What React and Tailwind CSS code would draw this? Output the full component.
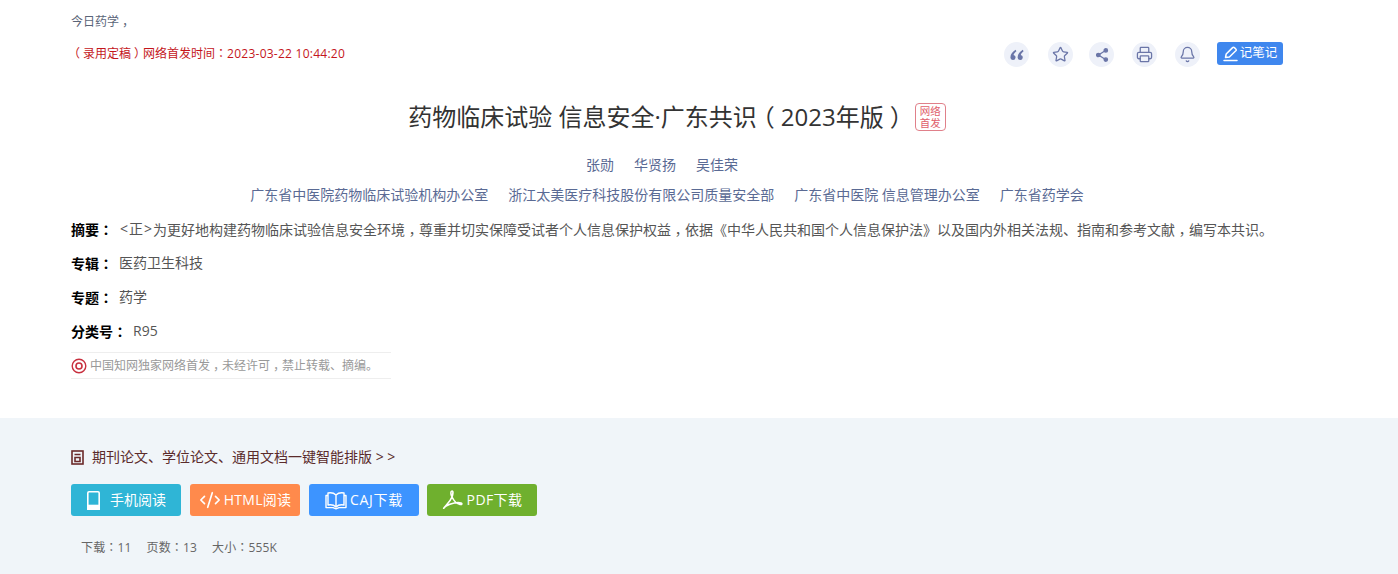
import React from 'react';
import { Star, Printer, Bell, CodeXml } from 'lucide-react';

const font = 'font-["Open_Sans","Noto_Sans_CJK_SC",sans-serif]';

// the reference centres its full-width punctuation, the SC font does not
const Zh = ({ children }) => children.split(/([：，（）])/).map((part, i) => {
    if (part === '：') return <span key={i} className='font-["Noto_Sans_CJK_TC",sans-serif]'>：</span>;
    if (part === '，') return <span key={i} className='inline-block translate-y-[0.3em] font-["Noto_Sans_CJK_TC",sans-serif]'>，</span>;
    if (part === '（' || part === '）') return <span key={i} className="inline-block px-[0.25em] [font-feature-settings:'halt']">{part}</span>;
    return part;
});

const QuoteIcon = () => (
    <svg viewBox="0 0 16 16" className="w-4 h-4" fill="#6b76a8">
        <path d="M6.600 2.800 C3.800 4.400 1.400 7 1.400 10.400 a2.600 2.600 0 1 0 3.200-2.500 C4.800 6.800 5.800 5.400 7.400 4.200 Z" />
        <path d="M13.800 2.800 C11 4.400 8.600 7 8.600 10.400 a2.600 2.600 0 1 0 3.200-2.500 C12 6.800 13 5.400 14.600 4.200 Z" />
    </svg>
);

const NoteIcon = () => (
    <svg viewBox="0 0 15 16" className="w-[15px] h-4" fill="none" stroke="currentColor" strokeWidth="1.500" strokeLinecap="round" strokeLinejoin="round">
        <path d="M2.500 11.500 L3.200 8 L9.600 1.600 a1.300 1.300 0 0 1 1.800 0 l1.400 1.400 a1.300 1.300 0 0 1 0 1.800 L6.400 11 Z" />
        <path d="M1 14.600 H14" />
    </svg>
);

const TabletIcon = () => (
    <svg viewBox="0 0 15 19" className="w-[15px] h-[19px] mr-[9px]" fill="none" stroke="currentColor" strokeWidth="1.600">
        <rect x="1.800" y="0.800" width="11.400" height="17.400" rx="1.200" />
        <rect x="1.800" y="14.500" width="11.400" height="3.700" fill="currentColor" />
    </svg>
);

const BookIcon = () => (
    <svg viewBox="0 0 22 19" className="w-[22px] h-[19px] mr-[3px]" fill="none" stroke="currentColor" strokeWidth="1.400" strokeLinejoin="round">
        <path d="M11 4 C9 2 6 1.400 3 2 V14 C6 13.400 9 14 11 16 C13 14 16 13.400 19 14 V2 C16 1.400 13 2 11 4 V16" />
        <path d="M3 4.500 H1 V16.600 H8 L11 17.800 L14 16.600 H21 V4.500 H19" />
    </svg>
);

const AcrobatIcon = () => (
    <svg viewBox="0 0 21 20" className="w-[21px] h-5 mr-1" fill="none" stroke="currentColor" strokeWidth="1.600" strokeLinecap="round" strokeLinejoin="round">
        <path d="M2 18 C4 15 8 12 10 7 C11 4 11.500 1 10 1 C8.500 1 8.500 4 10 7 C12 11 15 14 18 14.500 C20 14.800 20.500 13.500 19 13 C16 12 9 13 4 16 C2.500 17 1 19 2 18 Z" />
    </svg>
);

const DocIcon = () => (
    <svg viewBox="0 0 13 15" className="w-[13px] h-[15px] shrink-0" fill="none" stroke="#6b2a2a" strokeWidth="1.600">
        <rect x="1" y="1" width="11" height="13" />
        <path d="M3.500 4.500h6M4 7.500h5v4H4z" />
    </svg>
);

const TargetIcon = () => (
    <svg viewBox="0 0 16 16" className="w-4 h-4 shrink-0" fill="none" stroke="#c8303f">
        <circle cx="8" cy="8" r="6.800" strokeWidth="1.400" />
        <circle cx="8" cy="8" r="3" strokeWidth="1.600" />
    </svg>
);

const ShareIcon = () => (
    <svg viewBox="0 0 16 16" className="w-4 h-4" fill="currentColor" stroke="currentColor" strokeWidth="1.300">
        <path d="M11.500 3.500 L4.500 8 L11.500 12.500" fill="none" />
        <circle cx="11.800" cy="3.400" r="1.700" />
        <circle cx="4.300" cy="8" r="1.700" />
        <circle cx="11.800" cy="12.600" r="1.700" />
    </svg>
);

const tools = [
    { id: 'quote', icon: <QuoteIcon />, ml: '' },
    { id: 'star', icon: <Star className="w-[17px] h-[17px]" strokeWidth={1.800} />, ml: 'ml-[19px]' },
    { id: 'share', icon: <ShareIcon />, ml: 'ml-[16px]' },
    { id: 'print', icon: <Printer className="w-[17px] h-[17px]" strokeWidth={1.800} />, ml: 'ml-[18px]' },
    { id: 'bell', icon: <Bell className="w-[17px] h-[17px]" strokeWidth={1.800} />, ml: 'ml-[18px]' },
];

const orgs = ['广东省中医院药物临床试验机构办公室', '浙江太美医疗科技股份有限公司质量安全部', '广东省中医院 信息管理办公室', '广东省药学会'];

const rows = [
    { label: '专辑：', value: '医药卫生科技' },
    { label: '专题：', value: '药学' },
    { label: '分类号：', value: 'R95' },
];

const buttons = [
    { label: '手机阅读', cls: 'bg-[#2fb5d6]', icon: <TabletIcon /> },
    { label: 'HTML阅读', cls: 'bg-[#ff8a4c] ml-[9px] tracking-[0.25px]', icon: <CodeXml className="w-[22px] h-[22px] mr-[3px]" strokeWidth={1.800} /> },
    { label: 'CAJ下载', cls: 'bg-[#3d94ff] ml-[9px] tracking-[0.7px]', icon: <BookIcon /> },
    { label: 'PDF下载', cls: 'bg-[#6fb02e] ml-2 tracking-[0.4px]', icon: <AcrobatIcon /> },
];

export default function App() {
    return (
        <div className={`${font} w-[1398px] h-[574px] overflow-hidden bg-white`}>
            <div className="h-[418px] pl-[71px]">
                <div className="w-[1212px]">
                    <div className="h-[41px] pt-[13px] text-xs leading-4 text-[#5a6478]">今日药学<Zh>，</Zh></div>
                    <div className="flex justify-between h-[48px]">
                        <div className="pt-[4px] text-xs leading-4 text-[#c4161c]">
                            <Zh>（录用定稿）网络首发时间：</Zh>
                            <span className="tracking-[0.25px]">2023-03-22 10:44:20</span>
                        </div>
                        <div className="flex items-start pt-[1px]">
                            {tools.map((t) => (
                                <div key={t.id} className={`${t.ml} w-[25px] h-[25px] rounded-full bg-[#eef1f9] text-[#6b76a8] flex items-center justify-center`}>
                                    {t.icon}
                                </div>
                            ))}
                            <div className="ml-[17px] w-[66px] h-[23px] rounded-[3px] bg-[#3f87ee] text-white text-[12.500px] flex items-center justify-center gap-[2px]">
                                <NoteIcon />
                                记笔记
                            </div>
                        </div>
                    </div>
                    <div className="h-[56px] flex items-center justify-center">
                        <h1 className="text-2xl leading-8 text-[#333333] font-normal"><Zh>药物临床试验 信息安全·广东共识（2023年版）</Zh></h1>
                        <span className="ml-[7px] w-[31px] h-[28px] border border-[#e0808a] rounded-[4px] text-[#e0606c] text-[10.500px] leading-[12px] text-center pt-[1px]">网络<br />首发</span>
                    </div>
                    <div className="h-[30px] mt-[5px] flex items-center justify-center gap-5 pr-[30px] text-sm text-[#5a6a94]">
                        <span>张勋</span>
                        <span>华贤扬</span>
                        <span>吴佳荣</span>
                    </div>
                    <div className="h-[30px] flex items-center justify-center gap-5 pr-[20px] text-sm text-[#5a6a94]">
                        {orgs.map((o) => (
                            <span key={o}>{o}</span>
                        ))}
                    </div>
                    <div className="h-[34px] mt-[2px] flex items-center text-sm text-[#555555] whitespace-nowrap">
                        <span className="font-bold text-black mr-[7px]"><Zh>摘要：</Zh></span>
                        <span className="tracking-[1px]">&lt;正&gt;</span>
                        <span><Zh>为更好地构建药物临床试验信息安全环境，尊重并切实保障受试者个人信息保护权益，依据《中华人民共和国个人信息保护法》以及国内外相关法规、指南和参考文献，编写本共识。</Zh></span>
                    </div>
                    {rows.map((r) => (
                        <div key={r.label} className="h-[34px] flex items-center text-sm text-[#555555]">
                            <span className="font-bold text-black mr-[6px]"><Zh>{r.label}</Zh></span>
                            {r.value}
                        </div>
                    ))}
                    <div className="mt-[4px] w-[320px] h-[27px] border-y border-[#eeeeee] flex items-center gap-[3px] text-xs text-[#999999]">
                        <TargetIcon />
                        <span><Zh>中国知网独家网络首发，未经许可，禁止转载、摘编。</Zh></span>
                    </div>
                </div>
            </div>
            <div className="h-[156px] bg-[#f0f5f9] pl-[71px] pt-[30px]">
                <div className="h-[18px] flex items-center gap-2 text-sm text-[#5b2b2b]">
                    <DocIcon />
                    <span>期刊论文、学位论文、通用文档一键智能排版 &gt; &gt;</span>
                </div>
                <div className="flex mt-[18px]">
                    {buttons.map((b) => (
                        <div key={b.label} className={`${b.cls} w-[110px] h-[32px] rounded-[3px] text-white text-sm flex items-center justify-center`}>
                            {b.icon}
                            {b.label}
                        </div>
                    ))}
                </div>
                <div className="mt-[23px] pl-[10px] flex gap-[15px] text-xs leading-4 text-[#666666] tracking-[0.15px]">
                    <span><Zh>下载：11</Zh></span>
                    <span><Zh>页数：13</Zh></span>
                    <span><Zh>大小：555K</Zh></span>
                </div>
            </div>
        </div>
    );
}
